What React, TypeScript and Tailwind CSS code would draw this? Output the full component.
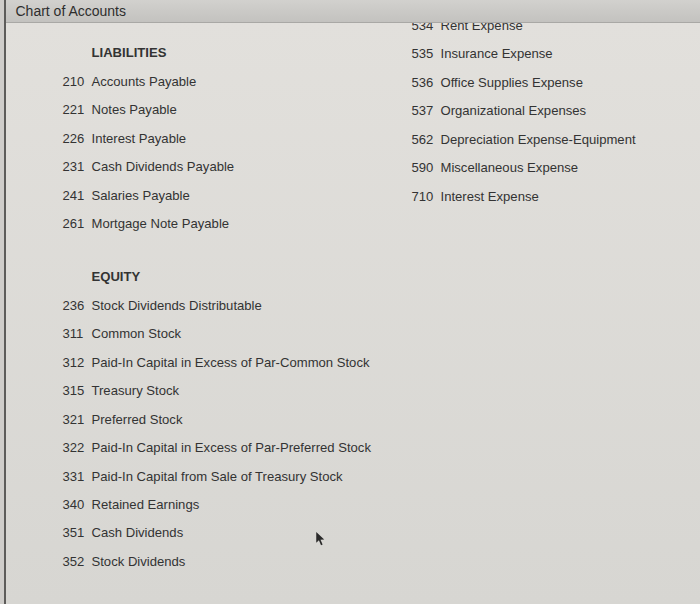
import React from "react";

const liabilities: [string, string][] = [
  ["210", "Accounts Payable"],
  ["221", "Notes Payable"],
  ["226", "Interest Payable"],
  ["231", "Cash Dividends Payable"],
  ["241", "Salaries Payable"],
  ["261", "Mortgage Note Payable"],
];

const equity: [string, string][] = [
  ["236", "Stock Dividends Distributable"],
  ["311", "Common Stock"],
  ["312", "Paid-In Capital in Excess of Par-Common Stock"],
  ["315", "Treasury Stock"],
  ["321", "Preferred Stock"],
  ["322", "Paid-In Capital in Excess of Par-Preferred Stock"],
  ["331", "Paid-In Capital from Sale of Treasury Stock"],
  ["340", "Retained Earnings"],
  ["351", "Cash Dividends"],
  ["352", "Stock Dividends"],
];

const expenses: [string, string][] = [
  ["534", "Rent Expense"],
  ["535", "Insurance Expense"],
  ["536", "Office Supplies Expense"],
  ["537", "Organizational Expenses"],
  ["562", "Depreciation Expense-Equipment"],
  ["590", "Miscellaneous Expense"],
  ["710", "Interest Expense"],
];

function Row({ n, name }: { n: string; name: string }) {
  return (
    <div className="flex h-[28.45px] items-center">
      <span className="w-[29px] shrink-0">{n}</span>
      <span className="whitespace-nowrap">{name}</span>
    </div>
  );
}

function Heading({ children }: { children: React.ReactNode }) {
  return (
    <div className="flex h-[28.45px] items-center pl-[29px] font-bold">{children}</div>
  );
}

export default function App() {
  return (
    <div
      className="relative flex h-[604px] w-[700px] overflow-hidden text-[13.1px] text-[#333333]"
      style={{ fontFamily: '"Liberation Sans", Arial, sans-serif' }}
    >
      <div className="w-[4px] shrink-0 bg-[#cfcdca]" />
      <div className="w-[1.5px] shrink-0 bg-[#5d5c5a]" />
      <div className="flex min-w-0 flex-1 flex-col">
        <div className="flex h-[23px] shrink-0 items-center border-b border-[#a9a8a5] bg-gradient-to-b from-[#d2d1ce] to-[#c3c2bf] pl-[10px] text-[14px] text-[#2e2e2e]">
          Chart of Accounts
        </div>
        <div className="flex flex-1 overflow-hidden bg-gradient-to-b from-[#e2e0dc] to-[#d7d6d2]">
          <div className="ml-[57px] w-[349px] shrink-0 pt-[16px]">
            <Heading>LIABILITIES</Heading>
            {liabilities.map(([n, name]) => (
              <Row key={n} n={n} name={name} />
            ))}
            <div className="h-[25px]" />
            <Heading>EQUITY</Heading>
            {equity.map(([n, name]) => (
              <Row key={n} n={n} name={name} />
            ))}
          </div>
          <div className="-mt-[11.5px] shrink-0">
            {expenses.map(([n, name]) => (
              <Row key={n} n={n} name={name} />
            ))}
          </div>
        </div>
      </div>
      <svg
        className="absolute left-[315px] top-[531px]"
        width="11"
        height="17"
        viewBox="0 0 10 16"
      >
        <path d="M1 1 L1 11 L3.5 8.8 L5.5 13.5 L7 12.8 L5 8.3 L8.5 8 Z" fill="#2a2a2a" />
      </svg>
    </div>
  );
}
